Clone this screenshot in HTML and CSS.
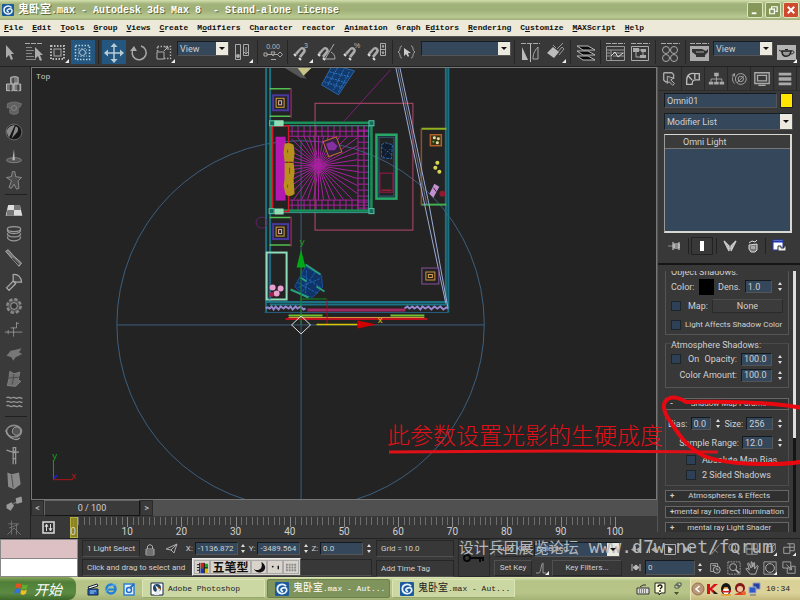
FILE: index.html
```html
<!DOCTYPE html>
<html lang="en">
<head>
<meta charset="utf-8">
<title>鬼卧室.max - Autodesk 3ds Max 8</title>
<link rel="stylesheet" href="styles.css">
</head>
<body>
<header class="titlebar">
  <svg class="logo" viewBox="0 0 12 12"><rect width="12" height="12" rx="1" fill="#1c5a9c"/><path d="M9.5 3.5C7 1 2 2 2 6s5 5 7 3 1-5-2-4-2 3 0 3" fill="none" stroke="#e8f4ff" stroke-width="1.5"/></svg>
  <h1 class="title"><span class="cjk">鬼卧室</span>.max - Autodesk 3ds Max 8  - Stand-alone License</h1>
  <button class="win" aria-label="Minimize"><svg viewBox="0 0 15 15"><path d="M4 11h5" stroke="#fff" stroke-width="2"/></svg></button>
  <button class="win" aria-label="Restore"><svg viewBox="0 0 15 15"><path d="M6 6V4h6v5h-2M4 6.500h5v5H4z" fill="none" stroke="#fff" stroke-width="1.300"/></svg></button>
  <button class="win close" aria-label="Close"><svg viewBox="0 0 15 15"><path d="M4 4l7 7M11 4l-7 7" stroke="#fff" stroke-width="2"/></svg></button>
</header>
<nav class="menu">
  <a href="#"><u>F</u>ile</a><a href="#"><u>E</u>dit</a><a href="#"><u>T</u>ools</a><a href="#"><u>G</u>roup</a><a href="#"><u>V</u>iews</a><a href="#"><u>C</u>reate</a><a href="#">M<u>o</u>difiers</a><a href="#">C<u>h</u>aracter</a><a href="#">reactor</a><a href="#"><u>A</u>nimation</a><a href="#">Graph E<u>d</u>itors</a><a href="#"><u>R</u>endering</a><a href="#">C<u>u</u>stomize</a><a href="#"><u>M</u>AXScript</a><a href="#"><u>H</u>elp</a>
</nav>
<div class="toolbar">
  <button class="tool narrow" aria-label="Select"><svg viewBox="0 0 20 24"><path d="M6 5v13l3-3 2 5 2-1-2-5h3z" fill="#aaa"/></svg></button>
  <button class="tool" aria-label="Select by name"><svg viewBox="0 0 24 24"><path d="M4 3.500h18" stroke="#aaa" stroke-dasharray="5 1"/><path d="M5 7.500h6M5 10.500h8M5 13.500h6M5 16.500h8M5 19.500h10" stroke="#888"/><path d="M14 7v12l3-3 2 5 2-1-2-5h3z" fill="#aaa"/></svg></button>
  <button class="tool" aria-label="Selection region"><svg viewBox="0 0 24 24"><rect x="5" y="6" width="13" height="13" fill="none" stroke="#bbb" stroke-width="2" stroke-dasharray="1.500 1.500"/><rect x="8" y="9" width="7" height="7" fill="none" stroke="#aaa"/><path d="M23 19v4h-4z" fill="#eee"/></svg></button>
  <button class="tool on" aria-label="Window crossing"><svg viewBox="0 0 24 24"><rect x="4.500" y="5.500" width="14" height="14" fill="none" stroke="#b8ccd8" stroke-width="1.500" stroke-dasharray="1.500 1.500"/><circle cx="11.500" cy="12.500" r="3" fill="none" stroke="#b8ccd8"/><rect x="7.500" y="8.500" width="8" height="8" fill="none" stroke="#b8ccd8" stroke-dasharray="1 2"/></svg></button>
  <i class="sep"></i>
  <button class="tool on" aria-label="Move"><svg viewBox="0 0 24 24"><path d="M12 6v14M5 13h14" stroke="#b8ccd8" stroke-width="1.500"/><path d="M12 3l3.500 4h-7zM12 23l3.500-4h-7zM2 13l4-3.500v7zM22 13l-4-3.500v7z" fill="#b8ccd8"/></svg></button>
  <button class="tool" aria-label="Rotate"><svg viewBox="0 0 24 24"><path d="M7 8a7 7 0 1 0 7-2" fill="none" stroke="#aaa" stroke-width="1.500"/><path d="M3 11l4-5 3 5z" fill="#aaa"/></svg></button>
  <button class="tool" aria-label="Scale"><svg viewBox="0 0 24 24"><rect x="5.500" y="6.500" width="13" height="12" fill="none" stroke="#aaa" stroke-width="1.500" stroke-dasharray="1.500 1.500"/><path d="M5 12h7v7H5z" fill="#333" stroke="#aaa"/><path d="M12 11l4-4M13 7h3v3" fill="none" stroke="#bbb"/><path d="M23 19v4h-4z" fill="#eee"/></svg></button>
  <span class="drop w52"><select aria-label="Reference coordinate system"><option>View</option></select></span>
  <button class="tool" aria-label="Pivot"><svg viewBox="0 0 24 24"><path d="M5.500 4.500h5v15h-5zM13.500 4.500h5v11h-5z" fill="none" stroke="#aaa"/><circle cx="8" cy="16" r="2" fill="#aaa"/><path d="M16 7v7l-2-2m2 2 2-2" stroke="#aaa" fill="none"/><path d="M23 19v4h-4z" fill="#eee"/></svg></button>
  <i class="sep"></i>
  <button class="tool" aria-label="Manipulate"><svg viewBox="0 0 24 24"><text x="12" y="9" class="tiny" text-anchor="middle">0.00</text><path d="M5 14.500h14M10 19.500h5" stroke="#aaa"/><path d="M3 13h3v3H3zM10 12h4l-2 4zM19 12l2.500 2.500L19 17l-2.500-2.500z" fill="#333" stroke="#aaa"/></svg></button>
  <i class="sep slim"></i>
  <button class="tool" aria-label="Snap"><svg viewBox="0 0 24 24"><path d="M5 13l5-5c3-3 8 2 5 5l-4 5-2-2 4-5c1-1-1-2-2-1l-4 5z" fill="#aaa"/><path d="M4 14l2 2M9 18l2 2" stroke="#ddd" stroke-width="2"/><text x="14" y="8" class="tiny">3</text><path d="M23 19v4h-4z" fill="#eee"/></svg></button>
  <button class="tool" aria-label="Angle snap"><svg viewBox="0 0 24 24"><path d="M3 13l5-5c3-3 8 2 5 5l-4 5-2-2 4-5c1-1-1-2-2-1l-4 5z" fill="#aaa"/><path d="M3 14l2 2M8 18l2 2" stroke="#ddd" stroke-width="2"/><path d="M19 4l-9 15h10c0-4-2-6-4-7" fill="none" stroke="#aaa"/></svg></button>
  <button class="tool" aria-label="Percent snap"><svg viewBox="0 0 24 24"><path d="M5 13l5-5c3-3 8 2 5 5l-4 5-2-2 4-5c1-1-1-2-2-1l-4 5z" fill="#aaa"/><path d="M4 14l2 2M9 18l2 2" stroke="#ddd" stroke-width="2"/><text x="14" y="8" class="tiny">%</text></svg></button>
  <button class="tool" aria-label="Spinner snap"><svg viewBox="0 0 24 24"><path d="M3 13l5-5c3-3 8 2 5 5l-4 5-2-2 4-5c1-1-1-2-2-1l-4 5z" fill="#aaa"/><path d="M3 14l2 2M8 18l2 2" stroke="#ddd" stroke-width="2"/><path d="M15.500 3.500h5v12h-5zM16 9.500h5M17 7l1-2 1 2zM17 12l1 2 1-2z" fill="none" stroke="#aaa"/></svg></button>
  <i class="sep"></i>
  <button class="tool" aria-label="Named selections"><svg viewBox="0 0 24 24"><path d="M6 6c-3 0-1 5-4 6 3 1 1 6 4 6M15 6c3 0 1 5 4 6-3 1-1 6-4 6" fill="none" stroke="#aaa"/><path d="M8 8v8l2-2 2 3 1-1-1-3h3z" fill="#ccc"/></svg></button>
  <span class="drop w90"><select aria-label="Named selection sets"><option></option></select></span>
  <i class="sep"></i>
  <button class="tool" aria-label="Mirror"><svg viewBox="0 0 24 24"><path d="M3 3.500h19" stroke="#aaa" stroke-dasharray="5 1"/><path d="M12.500 4v18" stroke="#bbb"/><path d="M4 7v13h6z" fill="#bbb"/><path d="M20 7c-4 4-5 8-5 12h5z" fill="none" stroke="#aaa"/></svg></button>
  <button class="tool" aria-label="Align"><svg viewBox="0 0 24 24"><path d="M4 13l6-6 6 5-5 6z" fill="#bbb"/><path d="M10 5l3 3M14 9l6-6M15 12l4-5 2 2-5 6" fill="none" stroke="#999"/><path d="M23 19v4h-4z" fill="#eee"/></svg></button>
  <i class="sep"></i>
  <button class="tool" aria-label="Layers"><svg viewBox="0 0 24 24"><path d="M3 16h11l7 4H9zM3 11h11l7 4H9zM3 6h11l7 4H9z" fill="#090909" stroke="#bbb"/></svg></button>
  <i class="sep slim"></i>
  <button class="tool" aria-label="Curve editor"><svg viewBox="0 0 24 24"><path d="M3 3.500h19" stroke="#aaa" stroke-dasharray="5 1"/><path d="M3.500 6.500h18v14h-18zM4 10h17M8 10v10M10 13h11M10 16h11M4 13h3M4 16h3" fill="none" stroke="#999"/><path d="M8 16l4-4 3 5 5-4" fill="none" stroke="#ddd"/></svg></button>
  <button class="tool" aria-label="Schematic view"><svg viewBox="0 0 24 24"><path d="M3 3.500h19" stroke="#aaa" stroke-dasharray="5 1"/><path d="M3.500 6.500h17v14h-17zM8 12v5h6M10 10h5v7" fill="none" stroke="#aaa"/><path d="M5 8h6v4H5zM13 9h5v3h-5zM12 15h6v3h-6z" fill="#aaa"/></svg></button>
  <i class="sep"></i>
  <button class="tool" aria-label="Material editor"><svg viewBox="0 0 24 24"><path d="M2 3.500h19" stroke="#aaa" stroke-dasharray="5 1"/><g fill="none" stroke="#aaa"><circle cx="7" cy="10" r="3.500"/><circle cx="15" cy="10" r="3.500"/><circle cx="7" cy="18" r="3.500"/><circle cx="15" cy="18" r="3.500"/></g></svg></button>
  <i class="sep slim"></i>
  <button class="tool" aria-label="Render scene"><svg viewBox="0 0 24 24"><path d="M2 3.500h19" stroke="#aaa" stroke-dasharray="5 1"/><path d="M2 6h19v15H2z" fill="#aaa"/><path d="M4 9h10l4 2 2-2v3l-3 3v2H8v-2l-4-3z" fill="#333"/><path d="M8 12h8" stroke="#aaa"/></svg></button>
  <span class="drop w60"><select aria-label="Render view"><option>View</option></select></span>
  <button class="tool" aria-label="Quick render"><svg viewBox="0 0 24 24"><path d="M3 5h19v15H3z" fill="#b4b4b4"/><path d="M8 11c0 7 8 7 9 0z" fill="#999" stroke="#222" stroke-width="1.500"/><path d="M8 12l-3-2M17 11c4-1 4 3 0 3M11 9.500h3" stroke="#222" fill="none"/><path d="M23 19v4h-4z" fill="#fff"/></svg></button>
</div>
<main class="work">
  <aside class="side">
    <button aria-label="Rigid bodies"><svg viewBox="0 0 24 24"><path d="M8 4l5-1 4 1v7H8zM3 12h8v8H3zM12 12h8v8h-8z" fill="#777" stroke="#ccc"/><path d="M11 5v6M8 13v7M17 13v7" stroke="#444" stroke-width="2"/></svg></button>
    <button aria-label="Cloth"><svg viewBox="0 0 24 24"><path d="M4 7l5-2h6l6 2-2 4h-2v7c-3 2-7 2-10 0v-7l-3 1z" fill="#606060" stroke="#777"/><circle cx="12" cy="12" r="3" fill="none" stroke="#888"/></svg></button>
    <button aria-label="Soft body"><svg viewBox="0 0 24 24"><circle cx="12" cy="12" r="9.500" fill="#141414" stroke="#777"/><path d="M3 12c1-5 5-8 10-8l-7 15zM14 5c4 1 3 5 2 7l-7 8z" fill="#888"/></svg></button>
    <button aria-label="Rope"><svg viewBox="0 0 24 24"><ellipse cx="12" cy="17" rx="9" ry="3" fill="#555" stroke="#888"/><path d="M10 17l2-13 1 13z" fill="#bbb"/></svg></button>
    <button aria-label="Deforming mesh"><svg viewBox="0 0 24 24"><path d="M10 2h3l1 6 7 1-4 4 1 9-3 1-3-6-3 5-3-1 3-8-6-4 6-1z" fill="#4d4d4d" stroke="#999"/></svg></button>
    <i></i>
    <button aria-label="Plane"><svg viewBox="0 0 24 24"><path d="M5 6h14l3 13H2z" fill="#ddd"/><path d="M12 6h7l1 6h-8zM4 12h8v7H3z" fill="#777"/></svg></button>
    <button aria-label="Spring"><svg viewBox="0 0 24 24"><g fill="none" stroke="#999" stroke-width="1.500"><ellipse cx="12" cy="6" rx="8" ry="3"/><path d="M4 7c0 6 16 6 16 0M4 11c0 6 16 6 16 0M4 15c0 7 16 7 16 0"/></g></svg></button>
    <button aria-label="Dashpot"><svg viewBox="0 0 24 24"><path d="M2 4l3-2 6 7 10 9-3 4-9-10z" fill="#777" stroke="#bbb"/><path d="M10 12l8 8" stroke="#444" stroke-width="2"/></svg></button>
    <button aria-label="Hinge"><svg viewBox="0 0 24 24"><path d="M3 19l8-8 3 3-8 8zM11 11V3c6-1 10 4 10 9h-7z" fill="#444" stroke="#aaa" stroke-width="1.500"/></svg></button>
    <button aria-label="Motor"><svg viewBox="0 0 24 24"><circle cx="12" cy="12" r="8" fill="#555" stroke="#888" stroke-width="3" stroke-dasharray="4 2.300"/><circle cx="12" cy="12" r="4" fill="#333" stroke="#aaa"/></svg></button>
    <button aria-label="Wind"><svg viewBox="0 0 24 24"><path d="M1 14.500h21M11.500 9v11M8 9.500h7v-7M15 4h3M5 12v5" fill="none" stroke="#999"/></svg></button>
    <button aria-label="Toy car"><svg viewBox="0 0 24 24"><path d="M3 14l5-6 6-1 7-2-3 5 4 2-8 4-3 4-2-4z" fill="#777"/></svg></button>
    <button aria-label="Fracture"><svg viewBox="0 0 24 24"><path d="M7 4l5 3 7-2-2 9 3 2-6 6-10-1 2-8z" fill="#707070" stroke="#888"/><path d="M12 7l-2 13M6 12l13-1" stroke="#444"/></svg></button>
    <button aria-label="Water"><svg viewBox="0 0 24 24"><path d="M3 7c3-3 4 2 7 0s4 2 7 0 3 2 5 0M3 12c3-3 4 2 7 0s4 2 7 0 3 2 5 0M3 17c3-3 4 2 7 0s4 2 7 0 3 2 5 0" fill="none" stroke="#999" stroke-width="1.500"/></svg></button>
    <i></i>
    <button aria-label="Constraint solver"><svg viewBox="0 0 24 24"><ellipse cx="12" cy="11" rx="9" ry="7" fill="none" stroke="#888" stroke-width="2"/><circle cx="15" cy="11" r="5" fill="#555" stroke="#aaa"/><path d="M2 10c4 11 13 13 17 9" fill="none" stroke="#999" stroke-width="1.500"/></svg></button>
    <button aria-label="Rag doll"><svg viewBox="0 0 24 24"><path d="M11 2h3v4h-3zM3 5l9 3 6-1M11 8v14M14 8v14M11 15h3" fill="none" stroke="#999" stroke-width="1.500"/></svg></button>
    <button aria-label="Preview"><svg viewBox="0 0 24 24"><path d="M4 3l5 2 9-2 2 14-8 6-7-3z" fill="#888"/><path d="M9 6l2 15" stroke="#444"/></svg></button>
    <button aria-label="Property editor"><svg viewBox="0 0 24 24"><path d="M3 13l6-3 3 4-4 6-5-3zM14 5l7-2 1 7-7 2z" fill="#999"/><path d="M11 12l5-3" stroke="#999"/></svg></button>
    <button aria-label="Utility"><svg viewBox="0 0 24 24"><path d="M9 3v17M5 7h13M6 12l11-4M4 20l8-8 8 8M15 7v13" fill="none" stroke="#777"/></svg></button>
  </aside>
  <section class="center">
    <div class="viewport">
      <svg viewBox="32 68 625 432" preserveAspectRatio="xMidYMid slice" aria-label="Top viewport">
        <text x="36" y="79" class="vlabel">Top</text>
        <g fill="none" stroke="#3c5f7e" stroke-width="1">
          <circle cx="301" cy="325" r="184"/>
          <path d="M117 325.500h368M301.500 141v360"/>
        </g>
        <path d="M285 68h14l8 11-6-1z" fill="#555"/><path d="M298 68h14l-8 8z" fill="#c8c488"/>
        <path d="M333 65l22 6-16 24-17-10z" fill="#123a6c" stroke="#2b66ac"/>
        <path d="M330 72l20 5M327 77l20 6M325 82l18 6M338 68l-10 18M344 70l-10 20M350 72l-11 20" stroke="#2f78c8" stroke-dasharray="2 1"/>
        <path d="M391 70l-46 51" stroke="#7c1c7c"/>
        <rect x="315.500" y="103.500" width="98" height="127" fill="none" stroke="#b8486e"/>
        <path d="M266.500 66v247M270.500 66v237M446.500 66v236M449 66v247" stroke="#1d7080" stroke-width="2" fill="none"/>
        <path d="M266 302.500h182M270 305h179" stroke="#1b7386" stroke-width="2"/><path d="M265 313h184" stroke="#265f80"/>
        <g id="stand" fill="none"><path d="M270 89h21M270 116.500h21" stroke="#50c050" stroke-width="1.500"/><path d="M291.500 88v30" stroke="#c02878"/><rect x="273.500" y="95.500" width="15" height="15" stroke="#4838a0" stroke-width="2"/><rect x="276.500" y="98.500" width="8" height="9" stroke="#d8a040"/><rect x="279" y="101" width="3" height="4" stroke="#e0b0a0"/></g>
        <use href="#stand" y="129"/>
        <g id="bed" fill="none" stroke="#a820a0"></g>
        <rect x="272" y="123" width="100" height="88" fill="none" stroke="#189058" stroke-width="2.500"/>
        <path d="M272 126h99M369 126v84M274 213h98" stroke="#389c90" fill="none"/>
        <path d="M273 126h16v86h-16z" fill="none" stroke="#d01828" stroke-width="1.500"/>
        <rect x="276" y="137" width="10" height="64" fill="#b418b0"/>
        <path d="M285 144q5-2 9 1l1 8-1 9h-9l-1-9zM285 163h9l1 9-1 8 1 14q-4 4-9 1l-2-9 1-7z" fill="#b8901c"/><path d="M288 150v3M290 168v6M288 185v3" stroke="#765610"/>
        <g fill="#186a60" stroke="#50c8a0"><rect x="270" y="121" width="5" height="5"/><rect x="369.500" y="121" width="5" height="5"/><rect x="269.500" y="209" width="5" height="5"/><rect x="369.500" y="209" width="5" height="5"/></g>
        <path d="M275 120.500h9v6h-9zM275 209h9v6h-9z" fill="#90dcb4"/>
        <g transform="rotate(-20 333 147)"><rect x="326" y="139" width="14" height="16" fill="#342040" stroke="#b87030"/><path d="M328 142h7l3 6-4 3-6-2z" fill="#8430a0"/></g>
        <rect x="377" y="135" width="20" height="64" fill="none" stroke="#28a868" stroke-width="2.500"/><rect x="379.500" y="137.500" width="15" height="59" fill="none" stroke="#286080"/>
        <path d="M382 145l4-2 7 2-1 14-10-1z" fill="#101c30" stroke="#2068b0" stroke-dasharray="3 1"/><path d="M383 148l8 6M384 157l7-8" stroke="#3088d0" stroke-dasharray="1 2"/>
        <rect x="380.500" y="173.500" width="13" height="19" fill="none" stroke="#a01848"/><path d="M382 190.500h10" stroke="#d02038"/>
        <path d="M422 129h25" stroke="#90b020" stroke-width="2"/><path d="M422 205h25" stroke="#40b050" stroke-width="2"/><path d="M422 129v77" stroke="#8c5028" stroke-width="1.500"/>
        <rect x="431" y="135" width="11" height="11" fill="#383018" stroke="#b06028" stroke-width="1.500"/><g fill="#e0e0a0"><circle cx="435" cy="138" r="1.500"/><circle cx="439" cy="139" r="1.500"/><circle cx="438" cy="143" r="1.500"/></g><circle cx="434" cy="142" r="1" fill="#40c040"/>
        <g fill="#d8d850"><circle cx="438" cy="163" r="2"/><circle cx="436" cy="168" r="2"/><circle cx="440" cy="172" r="2"/></g>
        <path d="M435 184l5 3-6 11-4-4z" fill="#c090d0"/><path d="M434 188l3 4" stroke="#422"/><circle cx="443" cy="194" r="3" fill="#901830"/>
        <path d="M396.500 68l29 138 21 98M400.500 68l29 136 19 104" fill="none" stroke="#9cacd8"/><path d="M398.500 68l29 137" stroke="#666e80"/>
        <circle cx="262" cy="223" r="5.500" fill="none" stroke="#602468"/>
        <rect x="267" y="253" width="20" height="47" fill="none" stroke="#90dcbc" stroke-width="2"/><path d="M270 254v46" stroke="#286080" stroke-width="2"/>
        <g fill="#e8a0d0"><circle cx="273" cy="288" r="3"/><circle cx="281" cy="289" r="3"/><circle cx="277" cy="294" r="3"/></g><circle cx="272" cy="295" r="2.500" fill="#a02048"/>
        <path d="M306 267l16 9 1 12-10 10-9-2-9-9z" fill="#103468" stroke="#1850a0"/><path d="M299 288l22-9M303 292l13-20M298 283l20 11M303 276l18 12M307 271l-1 24" stroke="#1c60b0" stroke-dasharray="3 1"/>
        <path d="M306 265l15 10M291 290l18 8M317 287l8 5M301 278l6 4" stroke="#28a080" stroke-width="2"/>
        <g fill="none"><rect x="422.500" y="268.500" width="17" height="16" stroke="#8850a0"/><rect x="426.500" y="272.500" width="9" height="8" stroke="#d09040"/><rect x="429" y="275" width="4" height="3" stroke="#d8a050"/></g>
        <path d="M266 309l2-1 2 1 2-2 2 3 2-3 3 3 2-3 3 2 2-2 3 2 2-2 2 3 3-3 2 2 3-2 3 3 2-1M405 309l3-2 2 2 3-2 2 2 3-2 3 3 2-3 3 2 3-2 3 3 3-3 3 2 3-2 3 3 3-2 2 1" fill="none" stroke="#9888d0" stroke-width="2"/><path d="M308 310.500h98" stroke="#a02860" stroke-width="3"/>
        <path d="M286 319.500h142" stroke="#c01020" stroke-width="2"/><path d="M289 316h34M391 316h34" stroke="#70c030" stroke-width="2"/><path d="M289 318h136" stroke="#d8a040"/>
        <path d="M301.500 325v-60M301 299.500h26" stroke="#108c20" fill="none"/><path d="M327.500 300v26" stroke="#a01020"/><path d="M297 268h9l-4.500-18z" fill="#00a818"/>
        <path d="M317 325h41" stroke="#d8c800" stroke-width="1.500"/><path d="M358 321v8l19-4z" fill="#d00000"/>
        <path d="M292 325.500l9.500-9 9.500 9-9.500 9z" fill="none" stroke="#ddd"/>
        <text x="300" y="245" class="ax green">y</text><text x="378" y="324" class="ax yellow">x</text>
        <path d="M53.500 480v-19" stroke="#18a018"/><path d="M53 480.500h20" stroke="#b01818"/><path d="M54 479l3-3" stroke="#2020c0" stroke-width="2"/>
        <text x="52" y="460" class="ax green">y</text><text x="71" y="480" class="ax red">x</text>
      </svg>
    </div>
    <div class="timeslider"><button aria-label="Previous frame">&lt;</button><button class="knob">0 / 100</button><button aria-label="Next frame">&gt;</button></div>
    <div class="trackbar">
      <button class="trackicon" aria-label="Mini curve editor"><svg viewBox="0 0 13 13"><path d="M1 1h11v11H1z" fill="#333" stroke="#ddd" stroke-width="1.500"/><path d="M4.500 10V4M3 6l1.500-3L6 6M8.500 3v6M7 7l1.500 3L10 7" fill="none" stroke="#ddd"/></svg></button>
      <div class="ruler" id="ruler"></div>
    </div>
  </section>
  <aside class="panel">
    <div class="tabs">
      <button aria-label="Create"><svg viewBox="0 0 20 20"><path d="M3 3h9l2 2v5M3 3v8l2 2h4" fill="none" stroke="#aaa" stroke-width="1.500"/><path d="M7 7v8l2-2 4 4 2-2-4-4 3-2z" fill="#444" stroke="#bbb"/></svg></button>
      <button aria-label="Modify"><svg viewBox="0 0 20 20"><path d="M3 16v-5c0-6 5-8 9-7h5v7h-4c-3 0-4 1-4 5zM9 11l-4-4M12 10V4" fill="none" stroke="#bbb" stroke-width="1.500"/></svg></button>
      <button aria-label="Hierarchy"><svg viewBox="0 0 20 20"><path d="M8 3h5v4H8zM2 13h5v3H2zM8 13h5v3H8zM14 13h5v3h-5z" fill="#aaa"/><path d="M10.500 7v6M4.500 13v-3h12v3" fill="none" stroke="#aaa"/></svg></button>
      <button aria-label="Motion"><svg viewBox="0 0 20 20"><circle cx="12" cy="10" r="6" fill="none" stroke="#aaa"/><circle cx="12" cy="10" r="3" fill="none" stroke="#aaa"/><path d="M8 14l8-8M5 5c-3 2-3 7 0 10M2 6l3-2v3" fill="none" stroke="#aaa"/></svg></button>
      <button aria-label="Display"><svg viewBox="0 0 20 20"><path d="M2 3h16v12H2zM5 6h10v6H5zM6 17h8" fill="none" stroke="#aaa" stroke-width="1.500"/></svg></button>
      <button aria-label="Utilities"><svg viewBox="0 0 20 20"><path d="M3 3h14v3H3zM3 8h14v4H3zM3 14h14v3H3z" fill="#aaa"/></svg></button>
    </div>
    <div class="named"><input class="field grow" aria-label="Object name" value="Omni01"><button class="swatch" aria-label="Object colour"></button></div>
    <span class="drop tall"><select aria-label="Modifier List"><option>Modifier List</option></select></span>
    <div class="stack"><div class="entry">Omni Light</div></div>
    <div class="stacktools">
      <button aria-label="Pin stack"><svg viewBox="0 0 20 16"><path d="M3 8h5" stroke="#888"/><path d="M8 4v8M9 8h4M14 4v8M9 6h5v4H9z" stroke="#ddd" fill="none"/></svg></button><i></i>
      <button class="box" aria-label="Show end result"><svg viewBox="0 0 20 16"><path d="M8 3h4v10H8z" fill="#fff"/></svg></button><i></i>
      <button aria-label="Make unique"><svg viewBox="0 0 20 16"><path d="M4 3l5 10V8zM16 3l-5 10V8zM7 8l3 2 3-2" fill="none" stroke="#ccc" stroke-width="1.300"/></svg></button>
      <button aria-label="Remove modifier"><svg viewBox="0 0 20 16"><path d="M6 7l8-1v6l-2 2H8l-2-3z" fill="#777" stroke="#ddd"/><path d="M6 5l3-2 3 1 2-2M9 8v3M11 8v3" stroke="#ddd" fill="none"/></svg></button><i></i>
      <button aria-label="Configure sets"><svg viewBox="0 0 20 16"><path d="M4 2h10v10H4z" fill="#fff" stroke="#2038b0"/><path d="M4 3.500h10" stroke="#2038b0" stroke-width="2"/><path d="M9 8h3v2h3V8h2v5H9z" fill="#eee" stroke="#333"/></svg></button>
    </div>
    <div class="scroll">
      <div class="rolls">
        <div class="group first">
          <div class="legend">Object Shadows:</div>
          <div class="row tall"><span>Color:</span><button class="black" aria-label="Shadow colour"></button><label class="push" for="dens">Dens.</label><input id="dens" class="field num" value="1.0"><b class="spin"></b></div>
          <div class="row tall"><input type="checkbox" id="map"><label for="map">Map:</label><button class="none">None</button></div>
          <div class="row tall small"><input type="checkbox" id="laf"><label for="laf">Light Affects Shadow Color</label></div>
        </div>
        <div class="group">
          <div class="legend">Atmosphere Shadows:</div>
          <div class="row"><input type="checkbox" id="on"><label for="on">On</label><label class="push" for="opa">Opacity:</label><input id="opa" class="field num" value="100.0"><b class="spin"></b></div>
          <div class="row"><label class="push" for="cam">Color Amount:</label><input id="cam" class="field num" value="100.0"><b class="spin"></b></div>
        </div>
        <button class="roll first"><em>-</em><span>Shadow Map Params</span></button>
        <div class="params">
          <div class="row tall"><label for="bias">Bias:</label><input id="bias" class="field val" value="0.0"><b class="spin"></b><label class="push" for="size">Size:</label><input id="size" class="field num" value="256"><b class="spin"></b></div>
          <div class="row tall"><label class="push" for="rng">Sample Range:</label><input id="rng" class="field num" value="12.0"><b class="spin"></b></div>
          <div class="row deep"><input type="checkbox" id="abs"><label for="abs">Absolute Map Bias</label></div>
          <div class="row deep"><input type="checkbox" id="two"><label for="two">2 Sided Shadows</label></div>
        </div>
        <button class="roll"><em>+</em><span>Atmospheres &amp; Effects</span></button>
        <button class="roll"><em>+</em><span>mental ray Indirect Illumination</span></button>
        <button class="roll"><em>+</em><span>mental ray Light Shader</span></button>
      </div>
      <div class="bar"><i></i></div>
    </div>
  </aside>
  <svg class="note" viewBox="380 394 420 80" aria-label="Annotation">
    <text x="387" y="444" class="notetext">此参数设置光影的生硬成度</text>
    <path d="M389 452l180-1 149 1" stroke="#e01018" stroke-width="3" fill="none"/>
    <path d="M802 408c-30-6-80-7-116-6-5-4-14-6-18-3-7 4-4 14 2 22 8 12 16 26 34 35 20 8 48 8 68 8 12 0 24-1 32-3" stroke="#e80810" stroke-width="4" fill="none"/>
  </svg>
</main>
<footer class="status">
  <div class="listener"><i></i><i></i></div>
  <div class="info">
    <div class="line"><span class="cell sel">1 Light Select</span>
      <svg class="ic" viewBox="0 0 16 16"><path d="M4 8h8v6H4zM5.500 8V5q2.500-3 5 0v3M4 10h8M4 12h8" fill="none" stroke="#aaa"/></svg>
      <svg class="ic plane" viewBox="0 0 16 16"><path d="M3 8l11-5-3 9-3-3zM8 9l6-6" fill="none" stroke="#aaa"/></svg>
      <label for="cx">X:</label><input id="cx" class="field co" value="-1136.872"><b class="spin"></b>
      <label for="cy">Y:</label><input id="cy" class="field co" value="-3489.564"><b class="spin"></b>
      <label for="cz">Z:</label><input id="cz" class="field co" value="0.0"><b class="spin"></b></div>
    <div class="line"><span class="cell wide">Click and drag to select and</span></div>
    <div class="ime"><button aria-label="Input method"><svg viewBox="0 0 14 14"><path d="M5 2h4v5H5z" fill="#d02020"/><path d="M9 3h4v5H9z" fill="#20a020"/><path d="M5 8h4v5H5z" fill="#2030c0"/><path d="M9 8h4v5H9z" fill="#e0c000"/><path d="M4 2v11M1 4h3M1 7h3M1 10h3M5 7.500h8M9 2v11" stroke="#111"/></svg></button><button class="name">五笔型</button><button aria-label="Half width"><svg viewBox="0 0 14 14"><path d="M9 1c2 8-3 10-8 8 4 6 13 3 12-3-1-3-2-4-4-5z" fill="#111"/></svg></button><button aria-label="Punctuation"><svg viewBox="0 0 14 14"><circle cx="4" cy="6" r="1" fill="#111"/><path d="M10 5v4" stroke="#111" stroke-width="1.500"/></svg></button><button aria-label="Soft keyboard"><svg viewBox="0 0 14 14"><path d="M1 4h12M1 7h12M1 10h12" stroke="#888" stroke-width="2" stroke-dasharray="2 1"/></svg></button></div>
  </div>
  <div class="grid"><span class="cell">Grid = 10.0</span><button class="cell">Add Time Tag</button></div>
  <button class="key" aria-label="Set keys"><svg viewBox="0 0 24 16"><circle cx="5" cy="8" r="3" fill="none" stroke="#080808" stroke-width="2"/><path d="M8 8h14M18 8v4M21 8v3" stroke="#080808" stroke-width="2" fill="none"/></svg></button>
  <div class="keys">
    <div class="line"><button class="btn">Auto Key</button><span class="drop w86"><select aria-label="Key selection"><option>Selected</option></select></span></div>
    <div class="line"><button class="btn">Set Key</button><svg class="ic" viewBox="0 0 16 16"><path d="M2 13h3c2 0 2-10 4-10v10h3" fill="none" stroke="#999"/><path d="M15 11v4h-4z" fill="#eee"/></svg><button class="btn filters">Key Filters...</button></div>
  </div>
  <div class="play">
    <div class="line"><svg class="ic" viewBox="0 0 16 16"><path d="M8 5v7L3 8.500zM13 5v7L8 8.500z" fill="#aaa"/></svg><svg class="ic" viewBox="0 0 16 16"><path d="M11 5v7L6 8.500zM4 5h1v7H4z" fill="#aaa"/></svg><svg class="ic" viewBox="0 0 16 16"><path d="M2.500 3.500h11v10h-11z" fill="none" stroke="#aaa"/><path d="M6 5v7l5-3.500z" fill="#ccc"/></svg><svg class="ic" viewBox="0 0 16 16"><path d="M5 5v7l5-3.500zM11 5h1v7h-1z" fill="#aaa"/></svg></div>
    <div class="line"><svg class="ic" viewBox="0 0 16 16"><path d="M4 4v7M12 4v7M8 5v5L5 7.500zM8 5v5l3-2.500z" fill="#bbb" stroke="#bbb"/></svg><input class="field frame" aria-label="Current frame" value="0"><b class="spin"></b></div>
  </div>
  <div class="navs">
    <svg viewBox="0 0 16 16"><path d="M4 14L13 3M5 7l6 5" stroke="#999"/></svg>
    <svg viewBox="0 0 16 16"><circle cx="6" cy="6" r="4" fill="none" stroke="#aaa"/><path d="M9 9l5 5" stroke="#aaa" stroke-width="2"/></svg>
    <svg viewBox="0 0 16 16"><path d="M2 2h6v6H2zM8 2h6v6H8zM2 8h6v6H2zM8 8h6v6H8z" fill="none" stroke="#999"/></svg>
    <svg viewBox="0 0 16 16"><path d="M4 5h7v7H4zM4 5l3-3h7l-3 3M14 2v7l-3 3" fill="none" stroke="#aaa"/><path d="M16 12v4h-4z" fill="#eee"/></svg>
    <svg viewBox="0 0 16 16"><path d="M2 6h7v7H2zM6 2h8v8H9M9 6h5M9 2v4" fill="none" stroke="#aaa"/><path d="M16 12v4h-4z" fill="#eee"/></svg>
    <svg viewBox="0 0 16 16"><path d="M3 3h8v9H3z" fill="none" stroke="#aaa"/><circle cx="10" cy="10" r="4" fill="#444" stroke="#bbb"/><path d="M10 8v2h2M5 5h4" stroke="#bbb" fill="none"/></svg>
    <svg viewBox="0 0 16 16"><path d="M1 1h14v14H1z" fill="none" stroke="#aaa" stroke-dasharray="2 1"/><circle cx="7" cy="7" r="4" fill="none" stroke="#bbb"/><path d="M10 10l4 4" stroke="#bbb" stroke-width="2"/></svg>
    <svg viewBox="0 0 16 16"><path d="M6 15l-5-6 1-1 3 2-2-7 1-1 3 6V1h1l1 6 1-5h1v7l3-4 1 1-3 9z" fill="none" stroke="#bbb"/></svg>
    <svg viewBox="0 0 16 16"><path d="M1 1h14v14H1z" fill="none" stroke="#aaa"/><circle cx="8" cy="8" r="5" fill="none" stroke="#bbb"/><path d="M16 12v4h-4z" fill="#eee"/></svg>
    <svg viewBox="0 0 16 16"><path d="M1 1h9v7H1zM6 8v6h9V6h-5M5 4l6 6M11 7v3H8" fill="none" stroke="#aaa"/></svg>
  </div>
  <div class="mark"><span>设计兵团展览论坛</span><span class="site">www.d7w.net/forum</span></div>
</footer>
<div class="taskbar">
  <button class="start"><svg viewBox="0 0 14 14"><path d="M2 3q2-2 5 0L6 7Q4 5 1 7z" fill="#e85020"/><path d="M8 3q2 2 5 0l-1 4q-3 2-5 0z" fill="#60b030"/><path d="M1 8q3-2 5 0l-1 4q-2-2-5 0z" fill="#3070e0"/><path d="M7 8q2 2 5 0l-1 4q-3 2-5 0z" fill="#f0c020"/></svg><span>开始</span></button>
  <div class="quick">
    <svg viewBox="0 0 14 14"><path d="M2 5l9-3 1 2-9 3z" fill="#eee" stroke="#123"/><path d="M2 7h10v6H2z" fill="#2860b0" stroke="#124"/><path d="M4 9h6M4 11h4" stroke="#9cf"/></svg>
    <svg viewBox="0 0 14 14"><circle cx="7" cy="7" r="4.500" fill="none" stroke="#2080d8" stroke-width="2.500"/><path d="M3 7.500h9" stroke="#2080d8" stroke-width="2"/><path d="M1 12Q3 4 13 2" fill="none" stroke="#70b8f0"/></svg>
    <svg viewBox="0 0 14 14"><path d="M2 2h10v11H2z" fill="#e4f0ff" stroke="#3080d0" stroke-width="1.500"/><circle cx="7" cy="8" r="2.500" fill="none" stroke="#2070c0" stroke-width="1.500"/><path d="M8 6l4-4" stroke="#2070c0" stroke-width="2"/></svg>
  </div>
  <button class="task"><svg viewBox="0 0 14 14"><path d="M1 1h12v12H1z" fill="#fff" stroke="#124"/><circle cx="7" cy="6" r="4" fill="#246"/><path d="M5 3l5 4-1 6H4l3-5z" fill="#e8e8f0"/><path d="M8 6l3 1" stroke="#d60"/></svg><span>Adobe Photoshop</span></button>
  <button class="task on"><svg viewBox="0 0 12 12"><rect width="12" height="12" rx="1" fill="#1c5a9c"/><path d="M9.500 3.500C7 1 2 2 2 6s5 5 7 3 1-5-2-4-2 3 0 3" fill="none" stroke="#e8f4ff" stroke-width="1.500"/></svg><span><span class="cjk">鬼卧室</span>.max - Aut...</span></button>
  <button class="task"><svg viewBox="0 0 12 12"><rect width="12" height="12" rx="1" fill="#1c5a9c"/><path d="M9.500 3.500C7 1 2 2 2 6s5 5 7 3 1-5-2-4-2 3 0 3" fill="none" stroke="#e8f4ff" stroke-width="1.500"/></svg><span><span class="cjk">鬼卧室</span>.max - Aut...</span></button>
  <div class="lang">
    <svg viewBox="0 0 14 14"><path d="M1 6h12v6H1z" fill="#ddd" stroke="#333"/><path d="M3 8h8M3 10h8" stroke="#333" stroke-dasharray="1 1"/><path d="M4 5q3-3 6-2" fill="none" stroke="#333"/></svg>
    <svg viewBox="0 0 14 14"><path d="M2 1h10v10H8l-2 2v-2H2z" fill="#ffd" stroke="#222"/><path d="M5 5q0-2 2-2t2 2l-2 2M7 8v2" fill="none" stroke="#111" stroke-width="1.300"/></svg>
    <svg viewBox="0 0 14 14"><path d="M7 1h4v3H7zM5 3h4v3H5z" fill="#dde" stroke="#453"/><path d="M4 10h5l-2.500 3z" fill="#453"/></svg>
  </div>
  <div class="tray">
    <svg viewBox="0 0 14 14"><circle cx="7" cy="7" r="6" fill="#b89878" stroke="#907050"/><path d="M8.500 4L5 7l3.500 3" fill="none" stroke="#fff" stroke-width="1.500"/></svg>
    <svg viewBox="0 0 14 14"><path d="M2 2h3v4l4-4h4L7 7l6 5H9L5 8v4H2z" fill="#d81018"/><path d="M8 8l5 4H9z" fill="#222"/></svg>
    <svg viewBox="0 0 14 14"><ellipse cx="7" cy="7" rx="5" ry="6" fill="#181818"/><ellipse cx="7" cy="9" rx="3" ry="3.500" fill="#fff"/><path d="M2 8q5 2 10 0v2q-5 1-10 0z" fill="#d02020"/><path d="M2 13h10M5 6h4" stroke="#f0a020" stroke-width="1.500"/></svg>
    <svg viewBox="0 0 14 14"><circle cx="7" cy="6" r="5" fill="#801818"/><circle cx="7" cy="7" r="3" fill="#f0c0a0"/><path d="M1 13q6-5 12 0z" fill="#e04020"/><circle cx="11" cy="11" r="2" fill="#f06030"/></svg>
    <svg viewBox="0 0 14 14"><path d="M6 1h7v6H6z" fill="#2840a0" stroke="#99b"/><path d="M2 5h7v6H2z" fill="#3058c8" stroke="#aac"/><path d="M3 13h6" stroke="#667"/></svg>
    <time>10:34</time>
  </div>
</div>
<script src="scene.js"></script>
</body>
</html>
```
FILE: styles.css
```css
* { box-sizing: border-box; }
body {
  margin: 0;
  height: 100vh;
  display: flex;
  flex-direction: column;
  overflow: hidden;
  background: #383838;
  color: #d0d0d0;
  font: 9px/12px Roboto, "Noto Sans CJK SC", sans-serif;
}
button, input, select { font: inherit; color: inherit; margin: 0; padding: 0; border: 0; background: none; border-radius: 0; }
button { display: flex; align-items: center; justify-content: center; white-space: nowrap; }
svg { display: block; flex: none; }

.titlebar {
  display: flex; align-items: center; gap: 2px; height: 20px; flex: none; padding: 0 1px 0 2px;
  background: linear-gradient(#d3dfae, #a3b37c 4px, #a0b078 10px, #b9c992 17px, #a0ae78);
}
.logo { width: 12px; height: 12px; }
.title {
  flex: 1; margin: 0 0 0 2px; white-space: pre; color: #fff; text-shadow: 1px 1px #5d6b3d;
  font: bold 10px/18px "Liberation Mono", "Noto Sans CJK SC", monospace;
}
.title .cjk { font-size: 11px; }
.win { width: 16px; height: 16px; border: 1px solid #dde6bf; border-radius: 2px; background: #86975a; }
.win svg { width: 14px; height: 14px; }
.win.close { background: #cf4a2c; }

.menu {
  display: flex; align-items: center; gap: 9px; height: 16px; flex: none; padding: 0 4px;
  background: #ece9d8; font: bold 8px/16px "Liberation Mono", monospace;
}
.menu a { color: #111; text-decoration: none; white-space: nowrap; }

.toolbar { display: flex; gap: 1px; height: 30px; flex: none; padding-top: 3px; border-top: 1px solid #555; background: #383838; }
.tool { width: 24px; height: 24px; flex: none; }
.tool svg { width: 24px; height: 24px; }
.narrow { width: 20px; }
.narrow svg { width: 20px; }
.tool.on { background: #235780; }
.tiny { font: 7px "Liberation Sans", sans-serif; fill: #bbb; }
.sep { width: 5px; flex: none; height: 24px; background: linear-gradient(#252525, #252525) 2px 0 / 1px 100% no-repeat; }
.sep.slim { width: 3px; background-position: 1px 0; }

.drop { position: relative; display: block; height: 15px; flex: none; margin-top: 1px; background: #34475b; border: 1px solid #161e26; border-right-color: #555; border-bottom-color: #555; }
.drop select { appearance: none; display: block; width: 100%; height: 100%; padding-left: 2px; outline: 0; line-height: 12px; }
.drop::after {
  content: ""; position: absolute; inset: 0 0 0 auto; width: 12px; pointer-events: none;
  background: #eceade;
}
.drop::before { content: ""; position: absolute; z-index: 1; right: 3px; top: 5px; border: 3px solid transparent; border-top-color: #111; border-bottom: 0; }
.w52 { width: 52px; } .w90 { width: 90px; } .w60 { width: 60px; } .w86 { width: 86px; }
.tall.drop { height: 17px; margin: 5px 7px 0 6px; }
.tall.drop::before { top: 6px; }

.work { position: relative; flex: 1; min-height: 0; display: flex; border-top: 1px solid #222; }
.side { width: 31px; flex: none; overflow: hidden; padding: 5px 0 0 2px; border-right: 1px solid #222; background: #3a3a3a; }
.side button { width: 24px; height: 24px; }
.side svg { width: 20px; height: 20px; }
.side i { display: block; height: 6px; margin: 0 3px; background: linear-gradient(#202020, #202020) 0 2px / 100% 1px no-repeat; }

.center { flex: 1; min-width: 0; display: flex; flex-direction: column; }
.viewport { flex: 1; min-height: 0; border: 1px solid #777; background: #232323; }
.viewport svg { width: 100%; height: 100%; }
.vlabel { font: 8px "Liberation Mono", monospace; fill: #ccc; }
.ax { font: 9px "Liberation Mono", monospace; }
.green { fill: #18a818; } .yellow { fill: #e0c810; } .red { fill: #b81818; }
.timeslider { display: flex; height: 16px; flex: none; background: #505050; }
.timeslider button { width: 13px; background: #3a3a3a; border: 1px solid #2a2a2a; }
.timeslider .knob { width: 96px; border-color: #666 #151515 #151515 #666; }
.trackbar { display: flex; height: 22px; flex: none; background: #383838; }
.trackicon { width: 34px; flex: none; }
.trackicon svg { width: 13px; height: 13px; }
.ruler { position: relative; flex: 1; margin: 0 42px 0 8px; font-size: 10px; }
.ruler i { position: absolute; top: 1px; width: 1px; height: 8px; background: #6e6e6e; }
.ruler i.major { height: 10px; background: #888; }
.ruler span { position: absolute; top: 10px; width: 20px; margin-left: -10px; text-align: center; }
.ruler::before { content: ""; position: absolute; left: -3px; top: 1px; width: 6px; height: 19px; background: #8c8420; border: 1px solid #b8b040; }

.panel { width: 143px; flex: none; display: flex; flex-direction: column; margin-bottom: 6px; border-left: 1px solid #555; }
.tabs { display: flex; height: 24px; flex: none; padding-left: 1px; border-bottom: 1px solid #2c2c2c; }
.tabs button { width: 23px; border-right: 1px solid #282828; }
.tabs svg { width: 18px; height: 18px; }
.named { display: flex; gap: 3px; margin: 2px 7px 0 6px; }
.field { display: block; height: 13px; min-width: 0; padding: 0 0 0 2px; background: #34475b; border: 1px solid #141a20; border-right-color: #555; border-bottom-color: #555; outline: 0; line-height: 11px; }
.grow { flex: 1; width: 0; height: 15px; }
.swatch { width: 13px; height: 15px; background: #ffe600; border: 1px solid #222; }
.stack { height: 99px; flex: none; margin: 4px 8px 0 6px; background: #34475b; border: 1px solid #d8d8d0; border-right-width: 2px; border-bottom-width: 2px; border-left-color: #999; }
.entry { height: 14px; padding-left: 18px; line-height: 14px; background: #3b3b3b; border-bottom: 1px solid #777; }
.stacktools { display: flex; height: 32px; flex: none; padding: 0 11px 5px 7px; border-bottom: 2px solid #161616; justify-content: space-between; align-items: center; }
.stacktools svg { width: 20px; height: 16px; }
.stacktools i { width: 1px; height: 16px; background: #222; }
.stacktools .box { border: 1px solid #222; }

.scroll { flex: 1; min-height: 0; display: flex; margin-top: 6px; overflow: hidden; }
.rolls { flex: 1; min-width: 0; overflow: hidden; padding: 0 4px 0 7px; }
.bar { width: 3px; margin-right: 4px; background: #151515; }
.bar i { display: block; height: 64%; background: #ddd; }
.group { border: 1px solid #555; border-top-color: #4a4a4a; margin-top: 8px; height: 45px; padding: 0 5px; }
.group.first { margin-top: -4px; height: 68px; border-top: 0; }
.legend { display: table; height: 12px; margin-top: -5px; white-space: nowrap; background: #383838; }
.first .legend { height: 10px; line-height: 10px; margin: 0; }
.row { display: flex; align-items: center; height: 16px; gap: 4px; white-space: nowrap; }
.row.tall { height: 19px; }
.row .push { margin-left: auto; }
.row .black { width: 18px; height: 16px; background: #000; }
.row .none { flex: 1; height: 14px; border: 1px solid #2a2a2a; border-top-color: #4c4c4c; background: #3b3b3b; }
.row input[type="checkbox"] { appearance: none; width: 10px; height: 10px; flex: none; background: #2e4055; border: 1px solid #1c242c; margin-right: 3px; }
.row.small { gap: 1px; font-size: 8px; }
.num { width: 31px; } .val { width: 24px; }
.spin { width: 7px; height: 11px; flex: none; display: flex; flex-direction: column; justify-content: space-between; align-items: center; padding: 1px 0; }
.spin::before, .spin::after { content: ""; border: 2px solid transparent; }
.spin::before { border-bottom: 3px solid #ddd; border-top: 0; }
.spin::after { border-top: 3px solid #ddd; border-bottom: 0; }
.roll { width: 100%; height: 12px; padding: 0 4px; margin-bottom: 4px; border: 1px solid #666; background: #303030; font-size: 8px; line-height: 10px; }
.roll.first { margin: 10px 0 0; }
.roll em { font-style: normal; font-weight: bold; }
.roll span { flex: 1; }
.params { height: 76px; padding: 4px 5px 0 2px; margin-bottom: 4px; border: 1px solid #4c4c4c; border-top: 0; }
.params .row { gap: 3px; }
.row.deep { height: 15px; padding-left: 18px; }
.note { position: absolute; right: 0; bottom: 64px; width: 420px; height: 80px; pointer-events: none; }
.notetext { font: 300 23px "Noto Sans CJK SC", sans-serif; fill: #e01018; }

.status { position: relative; display: flex; height: 39px; flex: none; gap: 4px; padding-right: 2px; border-top: 1px solid #222; font-size: 8px; }
.listener { width: 78px; flex: none; padding: 1px; display: grid; gap: 1px; background: #888; }
.listener i { background: #dcc0c4; }
.listener i + i { background: #fff; }
.info { position: relative; width: 290px; flex: none; }
.line { display: flex; align-items: center; height: 19px; gap: 2px; white-space: nowrap; }
.cell { display: block; height: 17px; padding-left: 4px; line-height: 16px; text-align: left; border: 1px solid #262626; border-bottom-color: #505050; }
.sel { width: 58px; overflow: hidden; }
.wide { width: 100%; overflow: hidden; }
.ic { width: 16px; height: 16px; }
.plane { margin: 0 5px 0 3px; }
.co { width: 43px; }
.grid { width: 78px; flex: none; display: grid; gap: 2px; padding-top: 1px; }
.key { width: 32px; flex: none; border: 1px solid #282828; }
.key svg { width: 24px; height: 16px; }
.keys { width: 130px; flex: none; }
.btn { width: 38px; height: 16px; flex: none; border: 1px solid #282828; border-top-color: #505050; border-left-color: #505050; }
.filters { width: 70px; }
.play { width: 74px; flex: none; }
.play .frame { width: 50px; height: 15px; flex: none; }
.play .line { gap: 1px; }
.navs { flex: 1; display: grid; grid-template-columns: repeat(5, 1fr); align-items: center; justify-items: center; }
.navs svg { width: 14px; height: 14px; }
.ime { position: absolute; left: 110px; bottom: 1px; display: flex; height: 18px; padding: 1px; background: #d8d4cc; border: 1px solid #eee; border-right-color: #555; border-bottom-color: #555; }
.ime button { width: 16px; border: 1px solid #aaa; color: #111; }
.ime .name { width: 41px; font: bold 12px/14px "Noto Sans CJK SC", sans-serif; }
.ime svg { width: 13px; height: 13px; }
.mark { position: absolute; right: 27px; top: -2px; display: flex; gap: 10px; align-items: center; color: #b4b8bc; font: 15px/20px "Noto Sans CJK SC", sans-serif; pointer-events: none; white-space: nowrap; }
.site { font: 18px/20px "DejaVu Sans Mono", monospace; }

.taskbar {
  display: flex; align-items: center; height: 23px; flex: none; color: #222;
  background: linear-gradient(#dbe5b4, #b5c486 4px, #b7c688 16px, #a2b274);
  font: 8px/12px "Liberation Mono", "Noto Sans CJK SC", monospace;
}
.start { width: 76px; height: 23px; flex: none; gap: 5px; color: #fff; border-radius: 0 8px 8px 0; background: linear-gradient(#8aa75c, #4f7f38 5px, #5c8a42 16px, #3c682a); font: italic 14px/20px "Noto Sans CJK SC", sans-serif; }
.start svg { width: 15px; height: 15px; }
.quick { width: 66px; flex: none; display: flex; gap: 4px; padding-left: 10px; }
.quick svg, .task svg { width: 14px; height: 14px; }
.task { width: 123px; height: 19px; flex: none; justify-content: flex-start; gap: 4px; padding-left: 7px; margin-right: 2px; border: 1px solid #dbe5b8; border-bottom-color: #98a86c; border-radius: 2px; background: #ccd8a4; }
.task.on { background: #7f935c; color: #fff; border-color: #6d7f4c; }
.task .cjk { font-size: 10px; }
.lang { margin-left: auto; display: flex; gap: 3px; padding-right: 6px; }
.lang svg { width: 14px; height: 14px; }
.tray { width: 110px; flex: none; height: 23px; display: flex; align-items: center; border-left: 1px solid #eee6b8; background: linear-gradient(#f2eabc, #d9d096 4px, #dcd39c 16px, #c4b97c); }
.tray svg { width: 14px; height: 14px; }
.tray time { margin: 0 10px 0 auto; }
```
FILE: scene.js
```js
// Bed cover: a quilted border of squares and a fan of folds round the centre.
const bed = document.getElementById("bed");
const NS = "http://www.w3.org/2000/svg";
let d = "";
for (let x = 292; x <= 370; x += 6) d += `M${x}.5 126V136M${x}.5 200V211`;
for (let y = 130; y <= 210; y += 6) d += `M358 ${y}.5H370`;
d += "M358.500 126V211M364.500 126V211M290 131.500H370M290 136.500H370M290 200.500H370M290 205.500H370";
const cx = 319, cy = 166;
for (let k = 0; k < 40; k++) {
  const a = k * Math.PI / 20, c = Math.cos(a), s = Math.sin(a);
  const tx = (c > 0 ? 39 : 27) / Math.max(Math.abs(c), 0.01);
  const ty = (s > 0 ? 34 : 30) / Math.max(Math.abs(s), 0.01);
  const r = Math.min(tx, ty);
  d += `M${cx} ${cy}L${Math.round(cx + c * r)} ${Math.round(cy + s * r)}`;
}
const path = document.createElementNS(NS, "path");
path.setAttribute("d", d);
bed.append(path);

// Frame ruler, 0 to 100.
const ruler = document.getElementById("ruler");
for (let f = 0; f <= 100; f++) {
  const tick = document.createElement("i");
  tick.style.left = f + "%";
  if (f % 10 === 0) {
    tick.className = "major";
    const label = document.createElement("span");
    label.textContent = f;
    label.style.left = f + "%";
    ruler.append(label);
  }
  ruler.append(tick);
}
```
